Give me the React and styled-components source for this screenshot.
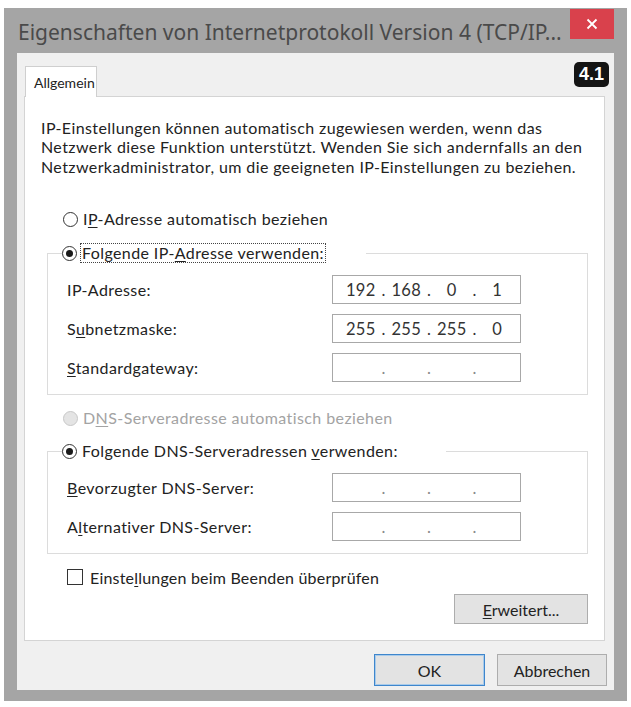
import { Fragment } from "react";
import styled, { createGlobalStyle } from "styled-components";

const GlobalStyle = createGlobalStyle`
  html, body {
    margin: 0;
    padding: 0;
    background: #ffffff;
  }
  body {
    font-family: "Noto Sans", "Open Sans", sans-serif;
    color: #222;
  }
`;

const Page = styled.div`
  width: 631px;
  box-sizing: border-box;
  padding: 8px 4px 6px 4px;
`;

const Window = styled.div`
  width: 623px;
  height: 693px;
  box-sizing: border-box;
  background: #a5a5a5;
  padding: 0 13px 11px 13px;
  display: flex;
  flex-direction: column;
`;

const TitleBar = styled.div`
  height: 45px;
  flex: none;
  display: flex;
  justify-content: space-between;
  align-items: flex-start;
  padding-left: 1px;
`;

const Title = styled.div`
  margin-top: 9px;
  line-height: 30px;
  font-size: 21px;
  color: #4a4a4a;
  white-space: nowrap;
`;

const CloseButton = styled.div`
  width: 44px;
  height: 30px;
  margin-top: 1px;
  background: #d9414c;
  display: flex;
  align-items: center;
  justify-content: center;
`;

const Body = styled.div`
  flex: 1;
  background: #f0f0f0;
  padding: 13px 9px 0 7px;
  display: flex;
  flex-direction: column;
  font-family: Lato, "Noto Sans", sans-serif;
`;

const TabRow = styled.div`
  display: flex;
  justify-content: space-between;
  align-items: flex-start;
  height: 30px;
`;

const Tab = styled.div`
  position: relative;
  z-index: 1;
  margin-left: 1px;
  width: 72px;
  height: 31px;
  box-sizing: border-box;
  border: 1px solid #cfcfcf;
  border-bottom: none;
  background: #fff;
  padding-left: 8px;
  font-size: 14px;
  line-height: 32px;
`;

const Badge = styled.div`
  margin-top: -4px;
  margin-right: -4px;
  height: 25px;
  padding: 0 5px;
  border-radius: 5px;
  background: #141414;
  color: #fff;
  font-family: "Liberation Sans", Arial, sans-serif;
  font-weight: 700;
  font-size: 18px;
  line-height: 25px;
`;

const Panel = styled.div`
  background: #fff;
  border: 1px solid #d4d4d4;
  padding: 0 16px 16px 0;
  display: flex;
  flex-direction: column;
  font-size: 16px;
  letter-spacing: 0.4px;
`;

const Description = styled.p`
  margin: 21px 0 0 16px;
  font-size: 16px;
  line-height: 19.4px;
  white-space: nowrap;
`;

const RadioRow = styled.div`
  display: flex;
  align-items: center;
  gap: 3px;
  height: 20px;
  margin: ${(p) => p.$margin || "0"};
  font-size: 16px;
  white-space: nowrap;
  color: ${(p) => (p.$disabled ? "#a3a3a3" : "#222")};
`;

const RadioCircle = styled.span`
  width: 15px;
  height: 15px;
  flex: none;
  box-sizing: border-box;
  border-radius: 50%;
  border: 1px solid ${(p) => (p.$disabled ? "#c8c8c8" : "#333")};
  background: ${(p) => (p.$disabled ? "#e4e4e4" : "#fff")};
  display: flex;
  align-items: center;
  justify-content: center;
  &::after {
    content: "";
    display: ${(p) => (p.$checked ? "block" : "none")};
    width: 7px;
    height: 7px;
    border-radius: 50%;
    background: #1a1a1a;
  }
`;

const RadioLabel = styled.span`
  padding: 0 1px;
  line-height: 18px;
  border: 1px dotted ${(p) => (p.$focused ? "#444" : "transparent")};
`;

const Group = styled.fieldset`
  margin: ${(p) => p.$margin};
  padding: 12px 66px 12px 19px;
  border: 1px solid #dcdcdc;
  display: flex;
  flex-direction: column;
  gap: 10px;
`;

const Legend = styled.legend`
  margin-left: -5px;
  padding: 0 ${(p) => p.$extra}px 0 0;
`;

const FieldRow = styled.div`
  display: flex;
  justify-content: space-between;
  align-items: center;
  height: 29px;
  font-size: 16px;
  white-space: nowrap;
`;

const IpBox = styled.div`
  width: 189px;
  height: 29px;
  box-sizing: border-box;
  border: 1px solid #a8a8a8;
  background: #fff;
  padding-left: 5px;
  display: flex;
  align-items: center;
  font-size: 16.5px;
  letter-spacing: 0.2px;
  color: #333;
`;

const Octet = styled.span`
  flex: 1;
  text-align: center;
`;

const Dot = styled.span`
  width: 0;
  display: flex;
  justify-content: center;
  color: ${(p) => (p.$empty ? "#8a8a8a" : "#333")};
`;

const Key = styled.span`
  text-decoration: underline;
  text-underline-offset: 2px;
`;

const CheckRow = styled.div`
  display: flex;
  align-items: center;
  gap: 7px;
  height: 20px;
  margin: 13px 0 0 42px;
  font-size: 16px;
  letter-spacing: 0.2px;
  white-space: nowrap;
`;

const CheckBox = styled.span`
  width: 16px;
  height: 16px;
  box-sizing: border-box;
  border: 1px solid #333;
  background: #fff;
`;

const Button = styled.button`
  width: ${(p) => p.$width}px;
  height: ${(p) => p.$height}px;
  box-sizing: border-box;
  border: 1px solid ${(p) => (p.$primary ? "#3f86cc" : "#adadad")};
  box-shadow: ${(p) => (p.$primary ? "inset 0 0 0 1px #a9cbea" : "none")};
  background: #e3e3e3;
  font-family: inherit;
  font-size: 16px;
  color: #222;
  padding: 0;
`;

const ButtonRight = styled.div`
  display: flex;
  justify-content: flex-end;
  margin: 7px 0 0 0;
`;

const Footer = styled.div`
  display: flex;
  justify-content: flex-end;
  gap: 12px;
  margin: 13px -2px 0 0;
`;

function Radio({ checked, disabled, focused, children, margin }) {
  return (
    <RadioRow $disabled={disabled} $margin={margin}>
      <RadioCircle $checked={checked} $disabled={disabled} />
      <RadioLabel $focused={focused}>{children}</RadioLabel>
    </RadioRow>
  );
}

function IpField({ octets }) {
  const empty = !octets;
  const parts = octets || ["", "", "", ""];
  return (
    <IpBox>
      {parts.map((o, i) => (
        <Fragment key={i}>
          {i > 0 && <Dot $empty={empty}>.</Dot>}
          <Octet>{o}</Octet>
        </Fragment>
      ))}
    </IpBox>
  );
}

export default function App() {
  return (
    <Page>
      <GlobalStyle />
      <Window>
        <TitleBar>
          <Title>Eigenschaften von Internetprotokoll Version 4 (TCP/IP...</Title>
          <CloseButton>
            <svg width="12" height="12" viewBox="0 0 12 12">
              <path d="M1.5 1.5 L10.5 10.5 M10.5 1.5 L1.5 10.5" stroke="#fff" strokeWidth="1.8" />
            </svg>
          </CloseButton>
        </TitleBar>
        <Body>
          <TabRow>
            <Tab>Allgemein</Tab>
            <Badge>4.1</Badge>
          </TabRow>
          <Panel>
            <Description>
              IP-Einstellungen können automatisch zugewiesen werden, wenn das
              <br />
              Netzwerk diese Funktion unterstützt. Wenden Sie sich andernfalls an den
              <br />
              Netzwerkadministrator, um die geeigneten IP-Einstellungen zu beziehen.
            </Description>

            <Radio margin="33px 0 0 38px">
              I<Key>P</Key>-Adresse automatisch beziehen
            </Radio>

            <Group $margin="14px 0 0 22px">
              <Legend $extra={40}>
                <Radio checked focused>
                  Folgende IP-<Key>A</Key>dresse verwenden:
                </Radio>
              </Legend>
              <FieldRow>
                <span>IP-Adresse:</span>
                <IpField octets={["192", "168", "0", "1"]} />
              </FieldRow>
              <FieldRow>
                <span>
                  S<Key>u</Key>bnetzmaske:
                </span>
                <IpField octets={["255", "255", "255", "0"]} />
              </FieldRow>
              <FieldRow>
                <span>
                  <Key>S</Key>tandardgateway:
                </span>
                <IpField />
              </FieldRow>
            </Group>

            <Radio disabled margin="13px 0 0 38px">
              D<Key>N</Key>S-Serveradresse automatisch beziehen
            </Radio>

            <Group $margin="13px 0 0 22px">
              <Legend $extra={46}>
                <Radio checked>
                  Folgende DNS-Serveradressen <Key>v</Key>erwenden:
                </Radio>
              </Legend>
              <FieldRow>
                <span>
                  <Key>B</Key>evorzugter DNS-Server:
                </span>
                <IpField />
              </FieldRow>
              <FieldRow>
                <span>
                  A<Key>l</Key>ternativer DNS-Server:
                </span>
                <IpField />
              </FieldRow>
            </Group>

            <CheckRow>
              <CheckBox />
              <span>
                Einste<Key>l</Key>lungen beim Beenden überprüfen
              </span>
            </CheckRow>

            <ButtonRight>
              <Button $width={134} $height={30}>
                <Key>E</Key>rweitert...
              </Button>
            </ButtonRight>
          </Panel>
          <Footer>
            <Button $primary $width={111} $height={32}>
              OK
            </Button>
            <Button $width={110} $height={32}>
              Abbrechen
            </Button>
          </Footer>
        </Body>
      </Window>
    </Page>
  );
}
